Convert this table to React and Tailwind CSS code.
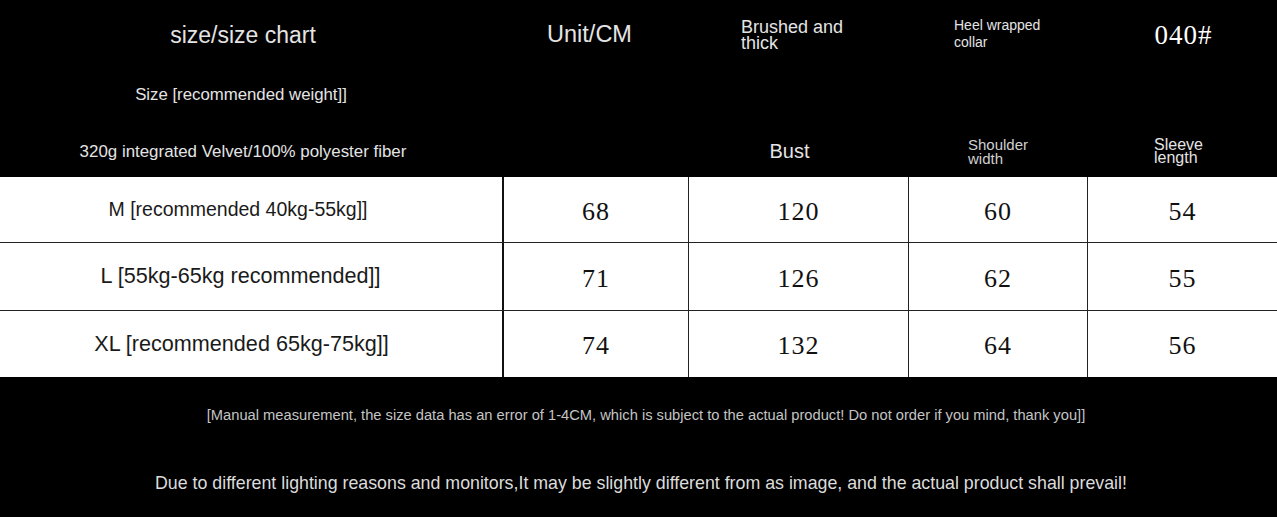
import React from "react";

const sans = "font-['Liberation_Sans',Arial,sans-serif]";
const serif = "font-['Liberation_Serif','Times_New_Roman',serif]";

const rows = [
  { label: "M [recommended 40kg-55kg]]", values: [68, 120, 60, 54], text: "text-[19.5px] pr-[26px]" },
  { label: "L [55kg-65kg recommended]]", values: [71, 126, 62, 55], text: "text-[21.6px] pr-[21px]" },
  { label: "XL [recommended 65kg-75kg]]", values: [74, 132, 64, 56], text: "text-[21.6px] pr-[19px]" },
];

const cols = "grid grid-cols-[504px_185px_220px_179px_189px]";

export default function App() {
  return (
    <div className={`w-[1277px] h-[517px] bg-black overflow-hidden ${sans}`}>
      {/* Header */}
      <div className={`${cols} grid-rows-[70px_50px_57px] text-[#e4e4e4]`}>
        <div className="flex items-center justify-center pr-[18px] text-[23px]">size/size chart</div>
        <div className="flex items-center justify-center pr-[14px] text-[23.5px]">Unit/CM</div>
        <div className="flex items-center pl-[52px] text-[18px] leading-[16px]">
          Brushed and
          <br />
          thick
        </div>
        <div className="flex items-center pl-[45px] pb-[3px] text-[14px] leading-[17px]">
          Heel wrapped
          <br />
          collar
        </div>
        <div className={`flex items-center justify-center pl-[2px] text-[27px] tracking-[1px] text-white ${serif}`}>040#</div>

        <div className="flex items-center justify-center pr-[22px] text-[16.8px]">Size [recommended weight]]</div>
        <div />
        <div />
        <div />
        <div />

        <div className="flex items-center justify-center pr-[18px] pt-[6px] text-[16.9px]">
          320g integrated Velvet/100% polyester fiber
        </div>
        <div />
        <div className="flex items-center justify-center pr-[19px] pt-[4px] text-[20px]">Bust</div>
        <div className="flex items-center pl-[59px] pt-[6px] text-[15px] leading-[14px] text-[#d0d0d0]">
          Shoulder
          <br />
          width
        </div>
        <div className="flex items-center pl-[66px] pt-[4px] text-[16px] leading-[13px]">
          Sleeve
          <br />
          length
        </div>
      </div>

      {/* Table */}
      <div className="bg-white">
        {rows.map((r, i) => (
          <div
            key={r.label}
            className={`${cols} ${i === 1 ? "h-[68px]" : "h-[66px]"} ${i < 2 ? "border-b border-[#222]" : ""}`}
          >
            <div className={`flex items-center justify-center text-[#1a1a1a] border-r-2 border-[#111] ${r.text}`}>
              {r.label}
            </div>
            {r.values.map((v, j) => (
              <div
                key={j}
                className={`flex items-center justify-center pt-[3px] text-[26px] tracking-[1px] text-[#111] ${serif} ${j < 3 ? "border-r border-[#222]" : ""}`}
              >
                {v}
              </div>
            ))}
          </div>
        ))}
      </div>

      {/* Notes */}
      <div className="flex flex-col items-center">
        <div className="mt-[27px] pl-[15px] text-[14.7px] text-[#c4c4c4]">
          [Manual measurement, the size data has an error of 1-4CM, which is subject to the actual product! Do not order if you mind, thank you]]
        </div>
        <div className="mt-[44px] pl-[5px] text-[17.8px] text-[#dcdcdc]">
          Due to different lighting reasons and monitors,It may be slightly different from as image, and the actual product shall prevail!
        </div>
      </div>
    </div>
  );
}
